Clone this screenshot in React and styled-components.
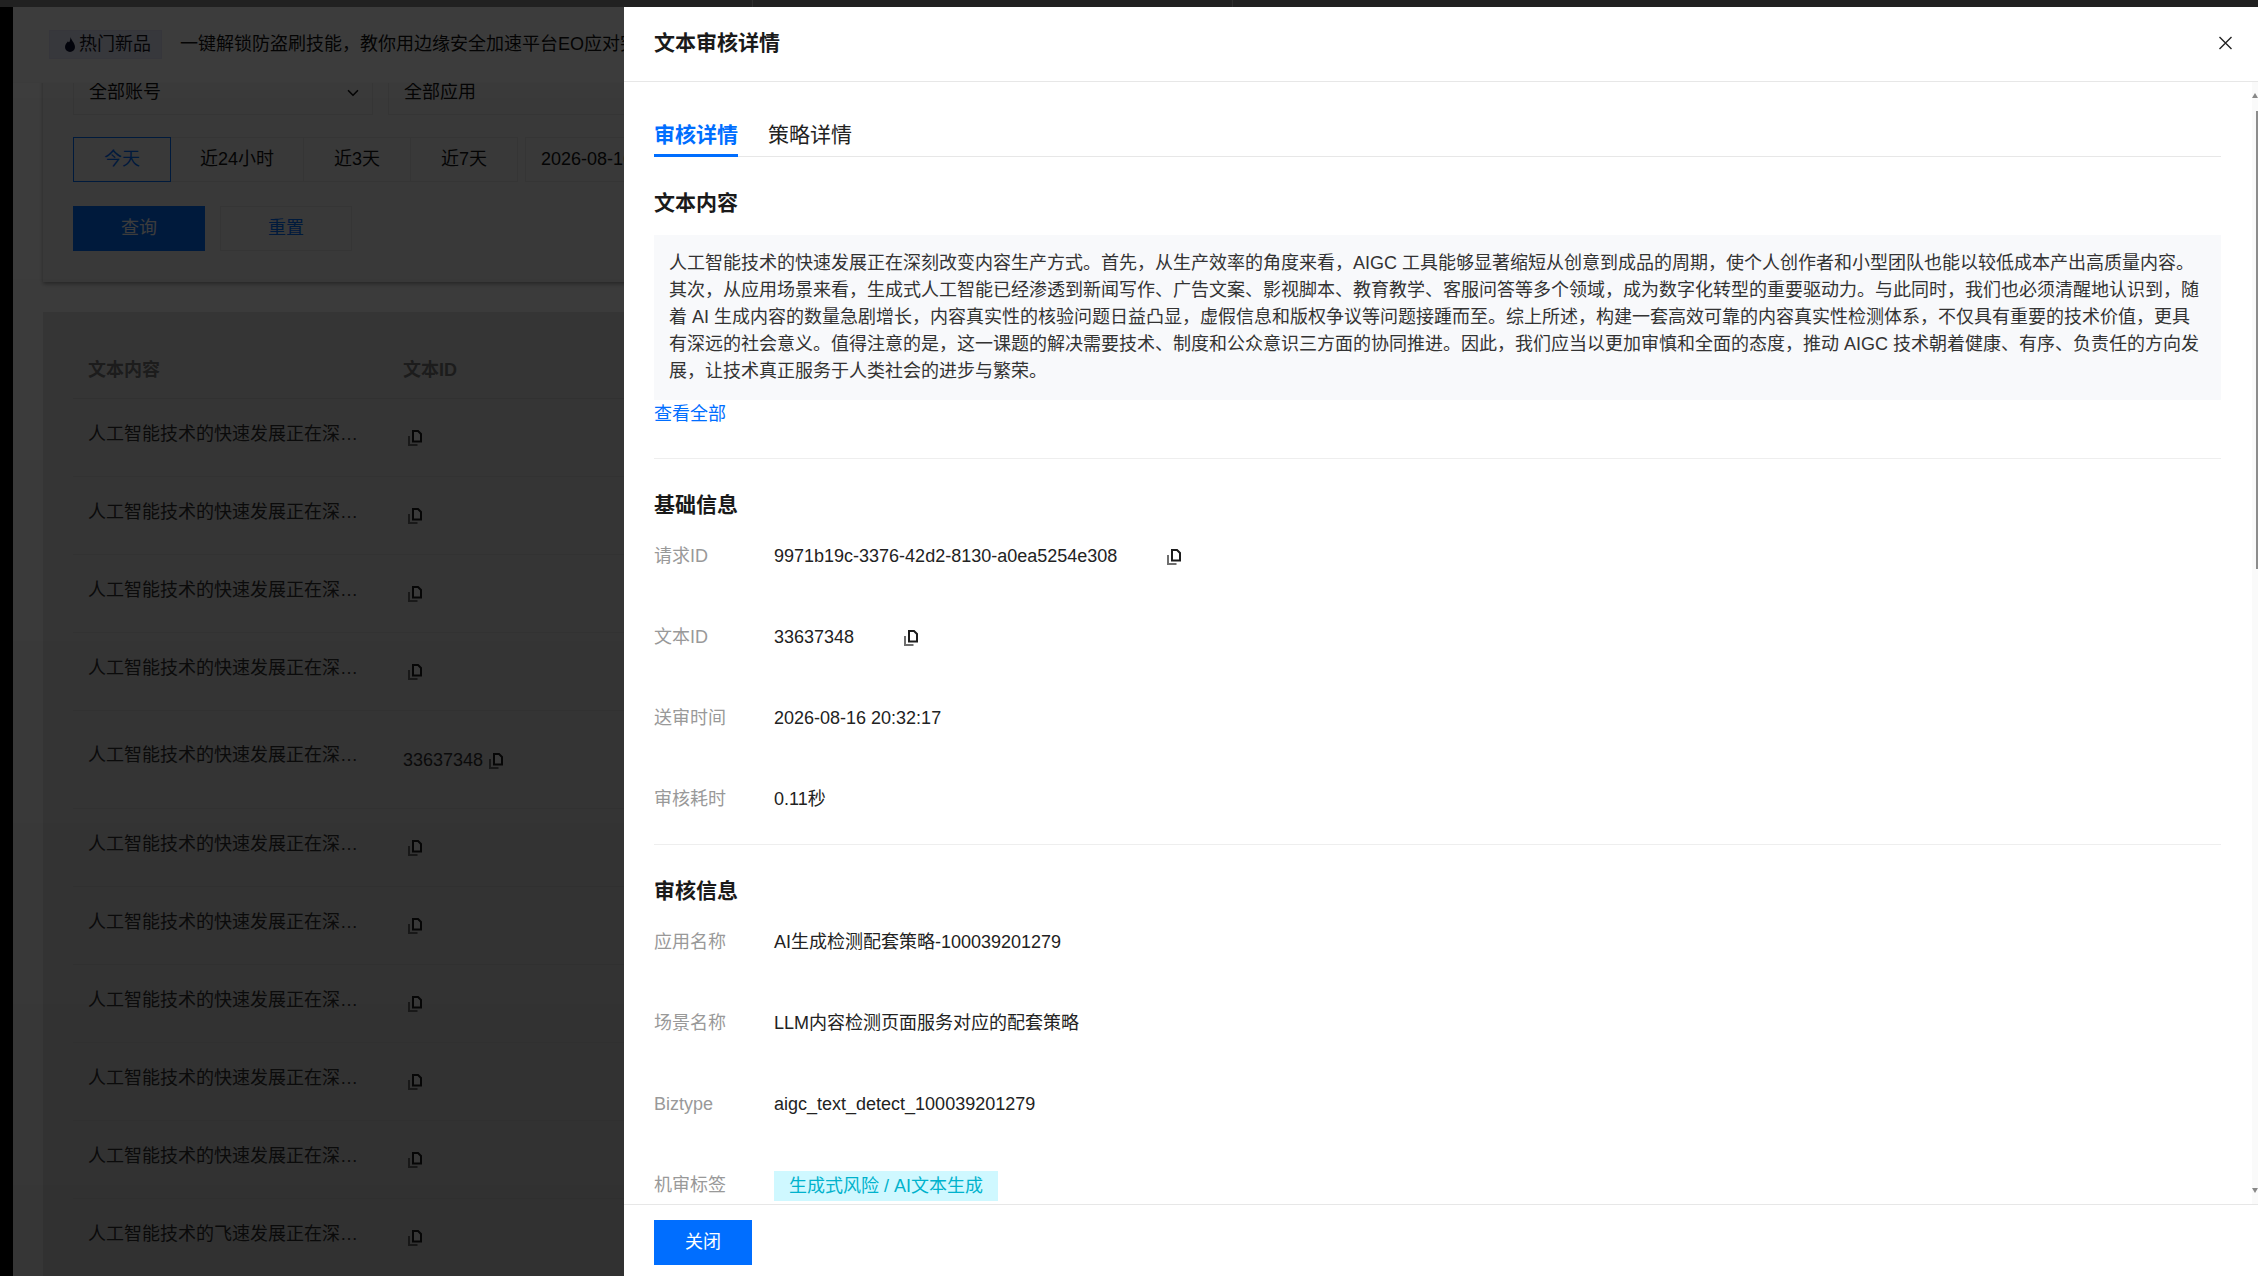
import React from "react";
import styled, { createGlobalStyle } from "styled-components";
import { ChevronDown } from "lucide-react";

const LONG_TEXT =
  "人工智能技术的快速发展正在深刻改变内容生产方式。首先，从生产效率的角度来看，AIGC 工具能够显著缩短从创意到成品的周期，使个人创作者和小型团队也能以较低成本产出高质量内容。其次，从应用场景来看，生成式人工智能已经渗透到新闻写作、广告文案、影视脚本、教育教学、客服问答等多个领域，成为数字化转型的重要驱动力。与此同时，我们也必须清醒地认识到，随着 AI 生成内容的数量急剧增长，内容真实性的核验问题日益凸显，虚假信息和版权争议等问题接踵而至。综上所述，构建一套高效可靠的内容真实性检测体系，不仅具有重要的技术价值，更具有深远的社会意义。值得注意的是，这一课题的解决需要技术、制度和公众意识三方面的协同推进。因此，我们应当以更加审慎和全面的态度，推动 AIGC 技术朝着健康、有序、负责任的方向发展，让技术真正服务于人类社会的进步与繁荣。";

const ROW_TEXT = "人工智能技术的快速发展正在深刻改变内容";

const ROWS = [
  { text: ROW_TEXT },
  { text: ROW_TEXT },
  { text: ROW_TEXT },
  { text: ROW_TEXT },
  { text: ROW_TEXT, id: "33637348" },
  { text: ROW_TEXT },
  { text: ROW_TEXT },
  { text: ROW_TEXT },
  { text: ROW_TEXT },
  { text: ROW_TEXT },
  { text: "人工智能技术的飞速发展正在深刻改变内容" },
];

const CopyIcon = () => (
  <CopySvg viewBox="0 0 14 16" aria-hidden="true">
    <path d="M1 6V15H9.5" fill="none" stroke="#6e6e6e" strokeWidth="2" />
    <path
      d="M5 1H10L13 4V11.5H5Z"
      fill="#fff"
      stroke="#1c1c1c"
      strokeWidth="2"
    />
  </CopySvg>
);

const FlameIcon = () => (
  <FlameSvg viewBox="0 0 10 15" aria-hidden="true">
    <path
      d="M5.6 0C6 3 10 6 10 10A5 5 0 0 1 0 10C0 7.4 1.8 6 3 4.2C3.5 5.4 4.2 5.6 4.6 4.6C5.1 3.4 5.4 1.6 5.6 0Z"
      fill="currentColor"
    />
  </FlameSvg>
);

const CloseIcon = () => (
  <CloseSvg viewBox="0 0 15 14" aria-hidden="true">
    <path
      d="M1.5 1L13.5 13M13.5 1L1.5 13"
      fill="none"
      stroke="#222"
      strokeWidth="1.4"
    />
  </CloseSvg>
);

const App = () => {
  return (
    <>
      <GlobalStyle />
      <TopBar>
        <TopSegment $width="753px" />
        <TopSegment $width="480px" />
      </TopBar>
      <Main>
        <Sidebar />
        <PageArea>
          <NoticeBar>
            <NoticeChip>
              <FlameIcon />
              热门新品
            </NoticeChip>
            <NoticeText>
              一键解锁防盗刷技能，教你用边缘安全加速平台EO应对突发流量攻击
            </NoticeText>
          </NoticeBar>
          <Scroller>
            <FilterCard>
              <SelectRow>
                <SelectBox>
                  全部账号
                  <ChevronDown size={18} strokeWidth={2.2} />
                </SelectBox>
                <SelectBox>全部应用</SelectBox>
              </SelectRow>
              <RangeRow>
                <RangeButton $active $width="98px">
                  今天
                </RangeButton>
                <RangeButton $width="133px">近24小时</RangeButton>
                <RangeButton $width="107px">近3天</RangeButton>
                <RangeButton $width="107px">近7天</RangeButton>
                <DateInput>2026-08-16 ~ 2026-08-16</DateInput>
              </RangeRow>
              <ActionRow>
                <PrimaryButton>查询</PrimaryButton>
                <GhostButton>重置</GhostButton>
              </ActionRow>
            </FilterCard>
            <TableCard>
              <TableHead>
                <HeadCell>文本内容</HeadCell>
                <HeadCell>文本ID</HeadCell>
              </TableHead>
              {ROWS.map((row, index) => (
                <TableRow key={index} $tall={Boolean(row.id)}>
                  <TextCell $tall={Boolean(row.id)}>{row.text}</TextCell>
                  <IdCell $tall={Boolean(row.id)}>
                    {row.id}
                    <CopyIcon />
                  </IdCell>
                </TableRow>
              ))}
            </TableCard>
          </Scroller>
        </PageArea>
      </Main>
      <Overlay />
      <Drawer>
        <DrawerHeader>
          <DrawerTitle>文本审核详情</DrawerTitle>
          <CloseIcon />
        </DrawerHeader>
        <DrawerBody>
          <TabList>
            <Tab $active>审核详情</Tab>
            <Tab>策略详情</Tab>
          </TabList>
          <Section>
            <SectionTitle>文本内容</SectionTitle>
            <TextBox>{LONG_TEXT}</TextBox>
            <MoreLink>查看全部</MoreLink>
          </Section>
          <Section>
            <SectionTitle $small>基础信息</SectionTitle>
            <InfoRow>
              <InfoLabel>请求ID</InfoLabel>
              <InfoValue>9971b19c-3376-42d2-8130-a0ea5254e308</InfoValue>
              <CopyIcon />
            </InfoRow>
            <InfoRow>
              <InfoLabel>文本ID</InfoLabel>
              <InfoValue>33637348</InfoValue>
              <CopyIcon />
            </InfoRow>
            <InfoRow>
              <InfoLabel>送审时间</InfoLabel>
              <InfoValue>2026-08-16 20:32:17</InfoValue>
            </InfoRow>
            <InfoRow>
              <InfoLabel>审核耗时</InfoLabel>
              <InfoValue>0.11秒</InfoValue>
            </InfoRow>
          </Section>
          <Section>
            <SectionTitle $small>审核信息</SectionTitle>
            <InfoRow>
              <InfoLabel>应用名称</InfoLabel>
              <InfoValue>AI生成检测配套策略-100039201279</InfoValue>
            </InfoRow>
            <InfoRow>
              <InfoLabel>场景名称</InfoLabel>
              <InfoValue>LLM内容检测页面服务对应的配套策略</InfoValue>
            </InfoRow>
            <InfoRow>
              <InfoLabel>Biztype</InfoLabel>
              <InfoValue>aigc_text_detect_100039201279</InfoValue>
            </InfoRow>
            <InfoRow>
              <InfoLabel>机审标签</InfoLabel>
              <RiskTag>生成式风险 / AI文本生成</RiskTag>
            </InfoRow>
          </Section>
          <ScrollTrack>
            <ScrollArrow $up />
            <ScrollThumb />
            <ScrollArrow />
          </ScrollTrack>
        </DrawerBody>
        <DrawerFooter>
          <CloseButton>关闭</CloseButton>
        </DrawerFooter>
      </Drawer>
    </>
  );
};

export default App;

const GlobalStyle = createGlobalStyle`
  * {
    box-sizing: border-box;
  }
  html, body {
    margin: 0;
    height: 100%;
    overflow: hidden;
  }
  body {
    font-family: "Liberation Sans", "Noto Sans CJK SC", sans-serif;
    font-size: 18px;
    line-height: 27px;
    color: #222;
    background: #000;
  }
`;

const TopBar = styled.div`
  display: flex;
  height: 7px;
  background: #212121;
`;

const TopSegment = styled.div`
  width: ${(p) => p.$width};
  border-right: 1px solid #2e2e2e;
`;

const Main = styled.div`
  position: relative;
  z-index: 0;
  display: flex;
  height: 1269px;
`;

const Sidebar = styled.div`
  width: 13px;
  flex-shrink: 0;
  background: #000;
`;

const PageArea = styled.div`
  flex: 1;
  display: flex;
  flex-direction: column;
  min-width: 0;
  background: #fff;
`;

const NoticeBar = styled.div`
  display: flex;
  align-items: center;
  gap: 18px;
  flex-shrink: 0;
  height: 76px;
  padding: 0 36px;
  background: #fbfbfb;
  border-bottom: 1px solid #f6f6f6;
`;

const NoticeChip = styled.div`
  display: flex;
  align-items: center;
  gap: 4px;
  flex-shrink: 0;
  width: 113px;
  height: 29px;
  padding-left: 15px;
  color: #16161f;
  background: #e6e9f8;
  border: 1px solid #dfe3f5;
  white-space: nowrap;
`;

const FlameSvg = styled.svg`
  width: 10px;
  height: 15px;
  color: #0c1030;
  flex-shrink: 0;
`;

const NoticeText = styled.div`
  width: 444px;
  color: #111;
  white-space: nowrap;
  overflow: hidden;
`;

const Scroller = styled.div`
  flex: 1;
  padding: 0 30px;
  overflow: hidden;
`;

const FilterCard = styled.section`
  display: flex;
  flex-direction: column;
  gap: 22px;
  margin-top: -30px;
  padding: 17px 30px 31px;
  background: #f2f2f2;
  box-shadow: 0 2px 4px rgba(0, 0, 0, 0.35);
`;

const SelectRow = styled.div`
  display: flex;
  gap: 15px;
`;

const SelectBox = styled.div`
  display: flex;
  align-items: center;
  justify-content: space-between;
  width: 300px;
  height: 45px;
  padding: 0 10px 0 15px;
  color: #111;
  border: 1px solid #e2e2e2;
`;

const RangeRow = styled.div`
  display: flex;
  white-space: nowrap;
`;

const RangeButton = styled.div`
  display: flex;
  align-items: center;
  justify-content: center;
  width: ${(p) => p.$width};
  height: 45px;
  color: ${(p) => (p.$active ? "#006eff" : "#111")};
  border: 1px solid ${(p) => (p.$active ? "#006eff" : "#e2e2e2")};
  border-left-width: ${(p) => (p.$active ? "1px" : "0")};
`;

const DateInput = styled.div`
  display: flex;
  align-items: center;
  width: 460px;
  height: 45px;
  margin-left: 7px;
  padding: 0 15px;
  color: #111;
  border: 1px solid #e2e2e2;
`;

const ActionRow = styled.div`
  display: flex;
  gap: 15px;
  margin-top: 2px;
`;

const PrimaryButton = styled.button`
  width: 132px;
  height: 45px;
  padding: 0;
  font: inherit;
  color: #fff;
  background: #006eff;
  border: none;
`;

const GhostButton = styled(PrimaryButton)`
  color: #006eff;
  background: transparent;
  border: 1px solid #e2e2e2;
`;

const TableCard = styled.section`
  margin-top: 30px;
  padding: 30px 30px 0;
  background: #e6e6e6;
`;

const TableHead = styled.div`
  display: grid;
  grid-template-columns: 315px 1fr;
  height: 57px;
  border-bottom: 1px solid #d4d4d4;
`;

const HeadCell = styled.div`
  padding: 15px 15px 0;
  font-weight: 700;
  color: #7a7a7a;
`;

const TableRow = styled.div`
  display: grid;
  grid-template-columns: 315px 1fr;
  height: ${(p) => (p.$tall ? "97.5px" : "78px")};
  border-bottom: 1px solid #dcdcdc;
`;

const TextCell = styled.div`
  padding: ${(p) => (p.$tall ? "31px" : "22px")} 30px 0 15px;
  color: #333;
  white-space: nowrap;
  overflow: hidden;
  text-overflow: ellipsis;
`;

const IdCell = styled.div`
  display: flex;
  align-items: flex-start;
  gap: 6px;
  padding: ${(p) => (p.$tall ? "36px 0 0 15px" : "31px 0 0 20px")};
  color: #333;

  svg {
    margin-top: ${(p) => (p.$tall ? "6px" : "0")};
  }
`;

const CopySvg = styled.svg`
  width: 14px;
  height: 16px;
  flex-shrink: 0;
`;

const Overlay = styled.div`
  position: fixed;
  top: 7px;
  left: 0;
  right: 0;
  bottom: 0;
  background: linear-gradient(rgba(0, 0, 0, 0.76), rgba(0, 0, 0, 0.79));
`;

const Drawer = styled.aside`
  position: fixed;
  top: 7px;
  left: 624px;
  right: 0;
  bottom: 0;
  display: flex;
  flex-direction: column;
  background: #fff;
`;

const DrawerHeader = styled.header`
  display: flex;
  align-items: center;
  justify-content: space-between;
  flex-shrink: 0;
  height: 75px;
  padding: 0 25px 2px 30px;
  border-bottom: 1px solid #e7e7e7;
`;

const DrawerTitle = styled.h2`
  margin: 0;
  font-size: 21px;
  font-weight: 700;
  line-height: 30px;
  color: #1a1a1a;
`;

const CloseSvg = styled.svg`
  width: 15px;
  height: 14px;
`;

const DrawerBody = styled.div`
  position: relative;
  flex: 1;
  padding: 30px 37px 0 30px;
  overflow: hidden;
`;

const TabList = styled.div`
  display: flex;
  gap: 30px;
  height: 45px;
  border-bottom: 1px solid #e7e7e7;
`;

const Tab = styled.div`
  display: flex;
  align-items: center;
  height: 45px;
  padding-top: 3px;
  font-size: 21px;
  font-weight: ${(p) => (p.$active ? 700 : 400)};
  color: ${(p) => (p.$active ? "#006eff" : "#222")};
  border-bottom: 3px solid ${(p) => (p.$active ? "#006eff" : "transparent")};
`;

const Section = styled.section`
  padding-bottom: 31px;
  border-bottom: 1px solid #eeeeee;
`;

const SectionTitle = styled.h3`
  margin: 32px 0 ${(p) => (p.$small ? "25px" : "19px")};
  font-size: 21px;
  font-weight: 700;
  line-height: 27px;
  color: #1a1a1a;
`;

const TextBox = styled.div`
  height: 165px;
  padding: 15px;
  color: #333;
  background: #f8f9fb;
`;

const MoreLink = styled.a`
  display: block;
  margin: 1px 0 -1px;
  color: #006eff;
`;

const InfoRow = styled.div`
  display: flex;
  align-items: center;
  height: 27px;
  margin-bottom: 54px;

  &:last-child {
    margin-bottom: 0;
  }

  svg {
    margin-left: 50px;
  }
`;

const InfoLabel = styled.div`
  width: 120px;
  flex-shrink: 0;
  color: #999;
`;

const InfoValue = styled.div`
  color: #222;
`;

const RiskTag = styled.div`
  height: 30px;
  padding: 0 15px;
  line-height: 30px;
  color: #00b2cc;
  background: #cff8ff;
`;

const ScrollTrack = styled.div`
  position: absolute;
  top: 0;
  right: 0;
  bottom: 0;
  display: flex;
  flex-direction: column;
  align-items: flex-end;
  width: 6px;
  background: #fafafa;
`;

const ScrollArrow = styled.div`
  margin: ${(p) => (p.$up ? "11px 0 0" : "auto 0 11px")};
  border-style: solid;
  border-width: ${(p) => (p.$up ? "0 3px 5px 3px" : "5px 3px 0 3px")};
  border-color: ${(p) =>
    p.$up
      ? "transparent transparent #888 transparent"
      : "#888 transparent transparent transparent"};
`;

const ScrollThumb = styled.div`
  width: 2px;
  height: 458px;
  margin-top: 13px;
  background: #8c8c8c;
`;

const DrawerFooter = styled.footer`
  flex-shrink: 0;
  height: 72px;
  padding: 15px 30px;
  border-top: 1px solid #e7e7e7;
  background: #fff;
`;

const CloseButton = styled.button`
  width: 98px;
  height: 45px;
  padding: 0;
  font: inherit;
  color: #fff;
  background: #006eff;
  border: none;
`;
